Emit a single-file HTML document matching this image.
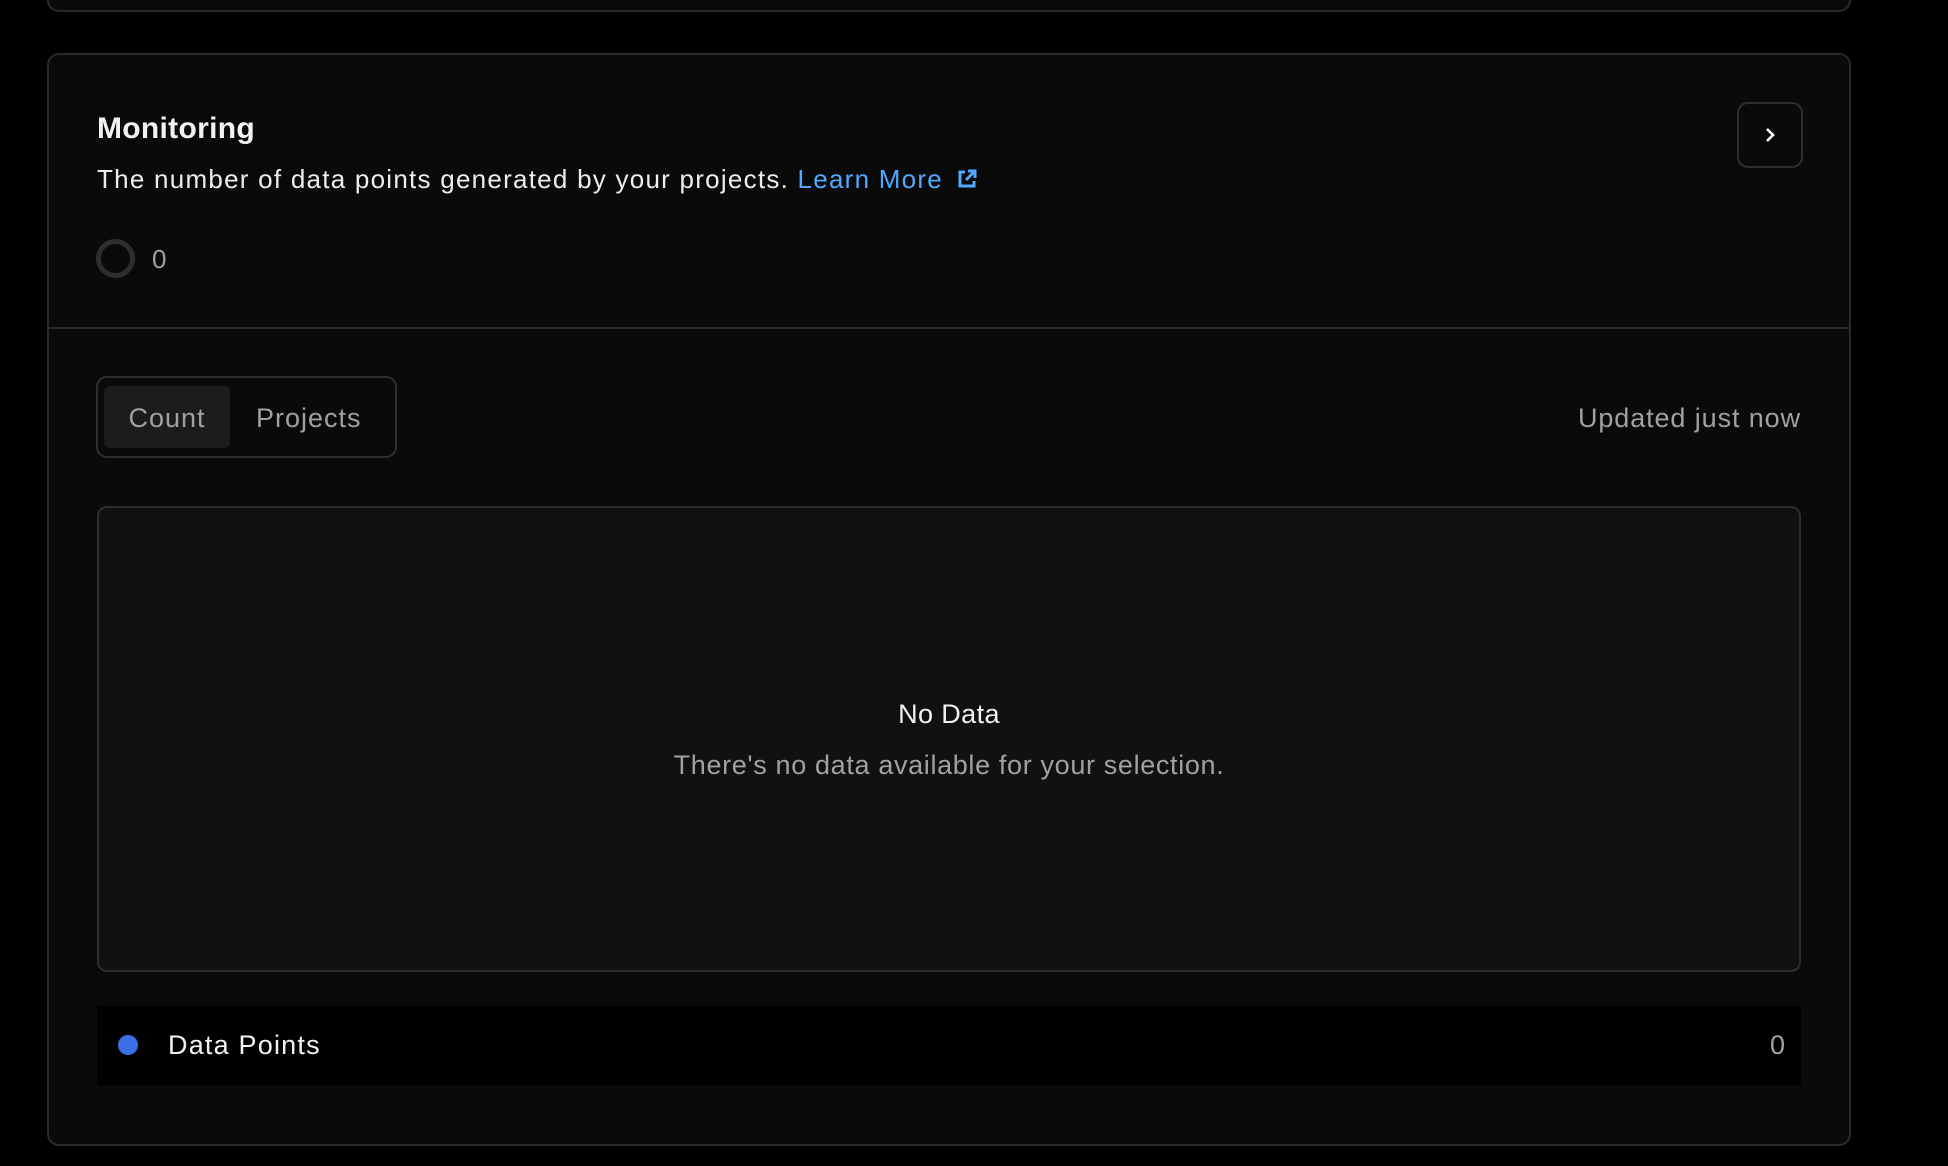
<!DOCTYPE html>
<html><head><meta charset="utf-8"><style>
*{box-sizing:border-box;margin:0;padding:0}
body{width:1948px;height:1166px;background:#000;font-family:"Liberation Sans",sans-serif;position:relative;overflow:hidden;color:#ededed}
.abs{position:absolute}
.top{left:47px;top:-20px;width:1804px;height:32px;border:2px solid #2a2a2a;border-radius:12px;background:#0a0a0a}
.card{left:47px;top:53px;width:1804px;height:1093px;border:2px solid #2a2a2a;border-radius:12px;background:#0a0a0a}
</style></head><body>
<div class="abs top"></div>
<div class="abs card"></div>
<div class="abs" style="left:97px;top:112px;font-size:30px;font-weight:700;color:#f2f2f2;letter-spacing:0.3px">Monitoring</div>
<div class="abs" style="left:97px;top:164px;font-size:26px;color:#ededed;white-space:nowrap;letter-spacing:1.25px">The number of data points generated by your projects. <span style="color:#52a8ff">Learn More</span>
<svg width="22" height="22" viewBox="0 0 22 22" style="vertical-align:-2px;margin-left:4px"><path d="M9 4H4v14h14v-5" fill="none" stroke="#52a8ff" stroke-width="3"/><path d="M12 3h7v7M19 3l-9 9" fill="none" stroke="#52a8ff" stroke-width="3"/></svg></div>
<div class="abs" style="left:96px;top:239px;width:39px;height:39px;border:5px solid #2e2e2e;border-radius:50%"></div>
<div class="abs" style="left:152px;top:244px;font-size:26px;color:#a1a1a1">0</div>
<div class="abs" style="left:1737px;top:102px;width:66px;height:66px;border:2px solid #2e2e2e;border-radius:11px;background:#0a0a0a"></div>
<svg class="abs" style="left:1760px;top:125px" width="20" height="20" viewBox="0 0 20 20"><path d="M7 4l6 6-6 6" fill="none" stroke="#fff" stroke-width="2.6"/></svg>
<div class="abs" style="left:47px;top:327px;width:1804px;height:2px;background:#2a2a2a"></div>
<div class="abs" style="left:96px;top:376px;width:301px;height:82px;border:2px solid #2e2e2e;border-radius:11px"></div>
<div class="abs" style="left:104px;top:386px;width:126px;height:62px;background:#1c1c1c;border-radius:6px"></div>
<div class="abs" style="left:104px;top:403px;width:126px;text-align:center;font-size:27px;color:#a1a1a1;letter-spacing:1px">Count</div>
<div class="abs" style="left:256px;top:403px;font-size:27px;color:#a1a1a1;letter-spacing:1px">Projects</div>
<div class="abs" style="right:147px;top:403px;font-size:27px;color:#a1a1a1;letter-spacing:0.9px">Updated just now</div>
<div class="abs" style="left:97px;top:506px;width:1704px;height:466px;border:2px solid #2e2e2e;border-radius:10px;background:#111"></div>
<div class="abs" style="left:97px;top:699px;width:1704px;text-align:center;font-size:27px;font-weight:500;color:#f2f2f2;letter-spacing:0.4px">No Data</div>
<div class="abs" style="left:97px;top:750px;width:1704px;text-align:center;font-size:27px;color:#a1a1a1;letter-spacing:0.65px">There's no data available for your selection.</div>
<div class="abs" style="left:97px;top:1006px;width:1704px;height:79px;background:#000"></div>
<div class="abs" style="left:118px;top:1035px;width:20px;height:20px;border-radius:50%;background:#3b6fe8"></div>
<div class="abs" style="left:168px;top:1030px;font-size:27px;color:#f2f2f2;letter-spacing:1.2px">Data Points</div>
<div class="abs" style="right:163px;top:1030px;font-size:27px;color:#a1a1a1">0</div>
</body></html>
